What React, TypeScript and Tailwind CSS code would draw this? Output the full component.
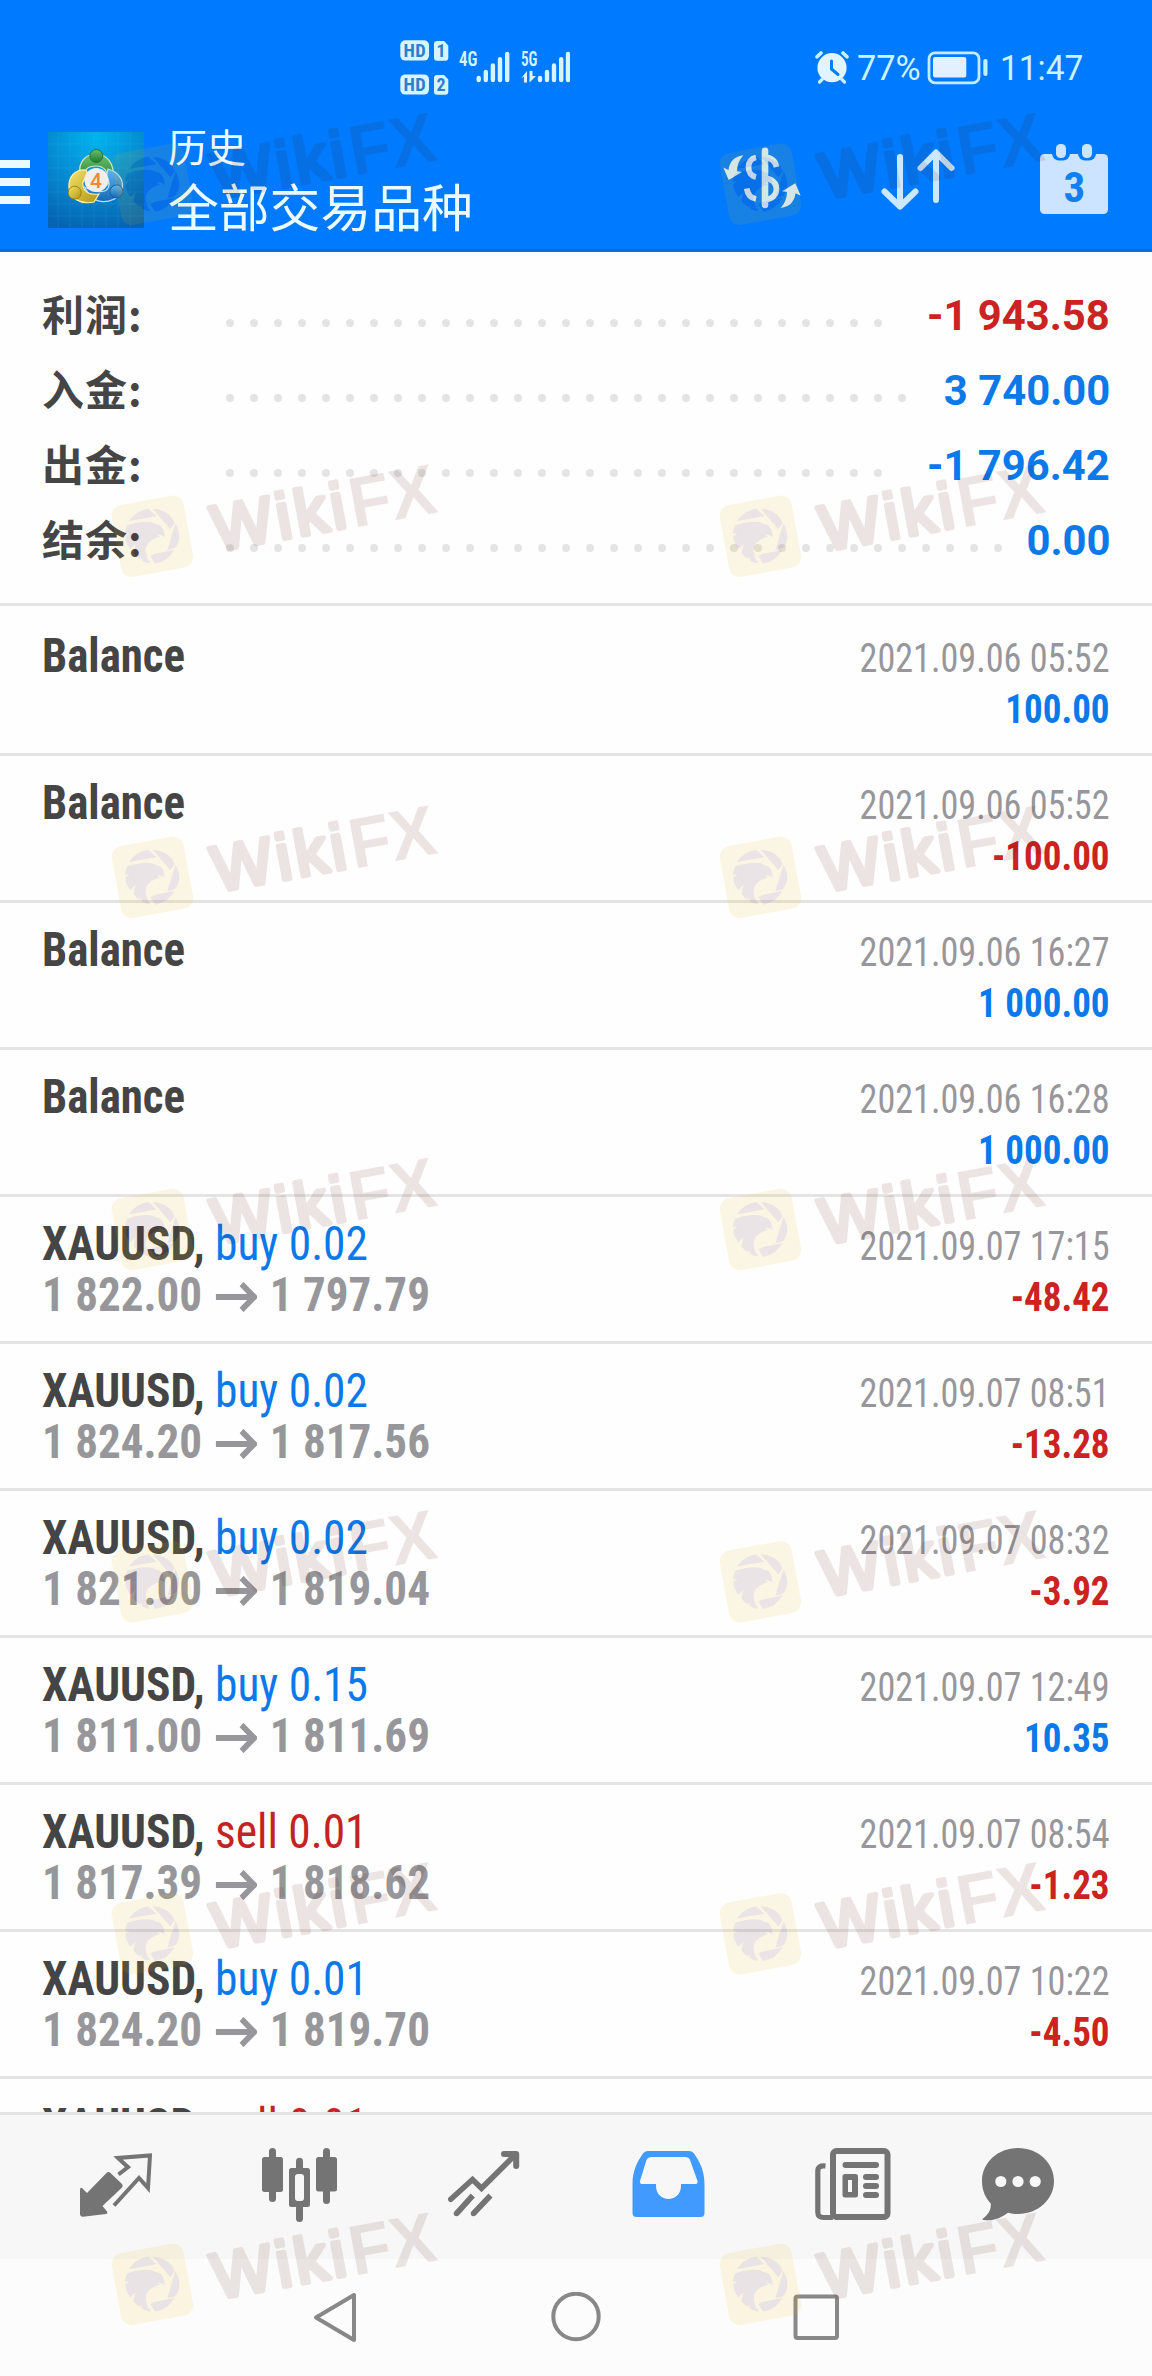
type Summary = { label: string; value: string; negative?: boolean; dots: number }

type Deal = {
  side?: 'buy' | 'sell'
  volume?: string
  open?: string
  close?: string
  time: string
  profit: string
  negative?: boolean
}

const summary: Summary[] = [
  { label: '利润:', value: '-1 943.58', negative: true, dots: 28 },
  { label: '入金:', value: '3 740.00', dots: 29 },
  { label: '出金:', value: '-1 796.42', dots: 28 },
  { label: '结余:', value: '0.00', dots: 33 },
]

const deals: Deal[] = [
  { time: '2021.09.06 05:52', profit: '100.00' },
  { time: '2021.09.06 05:52', profit: '-100.00', negative: true },
  { time: '2021.09.06 16:27', profit: '1 000.00' },
  { time: '2021.09.06 16:28', profit: '1 000.00' },
  { side: 'buy', volume: '0.02', open: '1 822.00', close: '1 797.79', time: '2021.09.07 17:15', profit: '-48.42', negative: true },
  { side: 'buy', volume: '0.02', open: '1 824.20', close: '1 817.56', time: '2021.09.07 08:51', profit: '-13.28', negative: true },
  { side: 'buy', volume: '0.02', open: '1 821.00', close: '1 819.04', time: '2021.09.07 08:32', profit: '-3.92', negative: true },
  { side: 'buy', volume: '0.15', open: '1 811.00', close: '1 811.69', time: '2021.09.07 12:49', profit: '10.35' },
  { side: 'sell', volume: '0.01', open: '1 817.39', close: '1 818.62', time: '2021.09.07 08:54', profit: '-1.23', negative: true },
  { side: 'buy', volume: '0.01', open: '1 824.20', close: '1 819.70', time: '2021.09.07 10:22', profit: '-4.50', negative: true },
  { side: 'sell', volume: '0.01', open: '1 817.39', close: '1 818.62', time: '2021.09.07 10:25', profit: '-1.23', negative: true },
]

const marks = [184.2, 536.3, 877.2, 1229.5, 1581.8, 1933.8, 2284.3].flatMap(y => [
  { x: 152.4, y },
  { x: 760.4, y },
])

function SignalIcons() {
  return (
    <svg width="170" height="60" viewBox="0 0 170 60" fill="#d6f5ff" className="font-['Roboto_Condensed'] font-bold">
      <rect x="0.3" y="1.2" width="28.7" height="20.4" rx="5" />
      <rect x="0.3" y="35.4" width="28.7" height="20.2" rx="5" />
      <path d="M37 2h7l4.3 4.5v12.3a3 3 0 0 1-3 3H37a3 3 0 0 1-3-3V5a3 3 0 0 1 3-3z" />
      <path d="M37 36h7l4.3 4.5v12.3a3 3 0 0 1-3 3H37a3 3 0 0 1-3-3V39a3 3 0 0 1 3-3z" />
      <g fill="#2a80cf">
        <text x="3.6" y="18" fontSize="18.5" textLength="22">HD</text>
        <text x="3.6" y="52.2" fontSize="18.5" textLength="22">HD</text>
        <text x="41" y="18.2" fontSize="18" textAnchor="middle">1</text>
        <text x="41" y="52.4" fontSize="18" textAnchor="middle">2</text>
      </g>
      <g className="font-semibold">
        <text x="59" y="26.6" fontSize="20" textLength="18.5" lengthAdjust="spacingAndGlyphs">4G</text>
        <text x="121" y="26.6" fontSize="20" textLength="16.5" lengthAdjust="spacingAndGlyphs">5G</text>
      </g>
      <g stroke="#d6f5ff" strokeWidth="4.4" strokeLinecap="round">
        <path d="M78.7 39v2M85.8 33v8M92.9 26.5V41M100 20.2V41M107.2 15V41" />
        <path d="M140 39v2M147 33v8M154 26.5V41M161.2 20.2V41M168 15V41" />
      </g>
      <path d="M121 39.5l6-7.5v11.5h-3v-6zM129.5 32v11.5l6.5-6.5h-3.5V32z" />
    </svg>
  )
}

function AlarmIcon() {
  return (
    <svg width="36" height="36" viewBox="0 0 36 36" fill="none" strokeLinecap="round">
      <circle cx="18" cy="16.7" r="14.6" fill="#e2f4ff" />
      <path d="M3 5.8L7 2M33 5.8L29 2" stroke="#c9f2ff" strokeWidth="3.6" />
      <path d="M8.5 28l-3 3M27.5 28l3 3" stroke="#c9f2ff" strokeWidth="3.2" />
      <path d="M17.5 10v8l6.5 5.5" stroke="#0a7cf5" strokeWidth="3" strokeLinejoin="round" />
    </svg>
  )
}

function BatteryIcon() {
  return (
    <svg width="63" height="36" viewBox="0 0 63 36">
      <rect x="3" y="1.8" width="50" height="30" rx="6" fill="none" stroke="#c3ecff" strokeWidth="2.8" />
      <rect x="7" y="6" width="33.3" height="20.6" rx="2" fill="#e3f0ff" />
      <rect x="57.3" y="8" width="4.2" height="17" rx="2" fill="#c3f0ff" />
    </svg>
  )
}

function AppLogo() {
  return (
    <svg width="96" height="96" viewBox="0 0 96 96">
      <defs>
        <radialGradient id="sky" cx="0.5" cy="0.05" r="1">
          <stop offset="0" stopColor="#00b4ee" />
          <stop offset="0.55" stopColor="#0587cf" />
          <stop offset="1" stopColor="#0563b0" />
        </radialGradient>
        <linearGradient id="green" x1="0" y1="0" x2="0" y2="1">
          <stop offset="0" stopColor="#6cc06a" />
          <stop offset="1" stopColor="#1c7a32" />
        </linearGradient>
        <linearGradient id="gold" x1="0" y1="0" x2="1" y2="1">
          <stop offset="0" stopColor="#f3e36a" />
          <stop offset="1" stopColor="#b49512" />
        </linearGradient>
        <linearGradient id="azure" x1="0" y1="0" x2="0" y2="1">
          <stop offset="0" stopColor="#5fb6ee" />
          <stop offset="1" stopColor="#1568b4" />
        </linearGradient>
      </defs>
      <rect width="96" height="96" fill="url(#sky)" />
      <path d="M10 0v96M22 0v96M34 0v96M46 0v96M58 0v96M70 0v96M82 0v96M0 12h96M0 24h96M0 36h96M0 48h96M0 60h96M0 72h96M0 84h96" stroke="#6fd0ff" strokeOpacity="0.16" strokeWidth="0.7" />
      <g strokeWidth="1.2">
        <path d="M32 42C30 30 38 22 48 22s19 9 17 24l-5 6C61 39 56 34 48 34s-11 3-11 8z" fill="url(#green)" stroke="#cfeac0" />
        <path d="M60 37c11 3 17 12 13.500 22-4.500 11-20 14-31 6l-6-10c9 5 18 6 22 3 4-4 3-10 0-14z" fill="url(#azure)" stroke="#b9e0ff" />
        <path d="M38 38c-11-1-18 7-17 18 1 10 11 17 25 14l5-8c-9 1-15-2-16-8-1-5 2-9 6-10z" fill="url(#gold)" stroke="#fff3b0" />
      </g>
      <circle cx="48.3" cy="24" r="6.5" fill="url(#green)" stroke="#1c6a2c" strokeWidth="0.8" />
      <circle cx="26.7" cy="60.700" r="6.5" fill="url(#gold)" stroke="#8a7412" strokeWidth="0.8" />
      <circle cx="68.5" cy="59.5" r="6.5" fill="url(#azure)" stroke="#0f5596" strokeWidth="0.8" />
      <circle cx="48.3" cy="48" r="12" fill="#f1efed" />
      <text x="48" y="55.500" textAnchor="middle" fontSize="21" fill="#f08a32" className="font-['Roboto'] font-medium">4</text>
    </svg>
  )
}

function CurrencyIcon() {
  return (
    <svg width="84" height="72" viewBox="0 0 84 72" fill="none" stroke="#d3ecff" strokeWidth="5.8">
      <path d="M45 6.8V61" strokeWidth="6.6" strokeLinecap="round" />
      <path d="M36 13.5c-5 1-7.5 5-7.5 9.5s2.500 9 7.5 10" />
      <path d="M45 13.5c6 0 10 3 11.500 9.500M45 34.5c7 0 11.5 5 11.5 10.500S52 55.500 46 55.500M26.700 44.500c1 6 4 9.500 9.300 10.500" />
      <g fill="#d3ecff" stroke="none">
        <path d="M23.3 11.3C14 12.5 9.5 18 8.5 26L3.3 23.5 8.7 36 22 28l-5-.8c0-6 2-11.2 6.3-15.900z" />
        <path d="M23.3 11.3C14 12.5 9.5 18 8.5 26L3.3 23.5 8.7 36 22 28l-5-.8c0-6 2-11.2 6.3-15.900z" transform="rotate(180 42 37.600)" />
      </g>
    </svg>
  )
}

function SortIcon() {
  return (
    <svg width="80" height="72" viewBox="0 0 80 72" fill="none" stroke="#cbe8ff" strokeWidth="6" strokeLinecap="round" strokeLinejoin="round">
      <path d="M22 13v49M6.500 47.500L22 62.500l15.500-15" />
      <path d="M58 56V9M42.500 24L58 8.500 73.500 24" />
    </svg>
  )
}

function CalendarIcon() {
  return (
    <svg width="72" height="72" viewBox="0 0 72 72">
      <rect x="2" y="10" width="68" height="60" rx="4.5" fill="#cce4ff" />
      <rect x="14" y="-4" width="18" height="20.5" rx="7" fill="#007bff" />
      <rect x="40" y="-4" width="18" height="20.5" rx="7" fill="#007bff" />
      <rect x="18" y="0" width="10" height="14" rx="4.5" fill="#cce4ff" />
      <rect x="44" y="0" width="10" height="14" rx="4.5" fill="#cce4ff" />
      <text x="36.3" y="57.600" textAnchor="middle" fontSize="43" fill="#0f7ff2" className="font-['Roboto_Condensed'] font-bold">3</text>
    </svg>
  )
}

function QuotesIcon() {
  return (
    <svg width="72" height="76" viewBox="0 0 72 76" fill="none">
      <path d="M0 41q1-2 2.500-.5L7 45l19.500-20q2-2 4 0L42 36q1.500 1.800 0 3.500L22.500 58l4.500 5.500q1 2-1 2.500L3 68.700q-3 0-3-3z" fill="#747474" />
      <path d="M38.500 26.500l9.500-7.300L38 10l32-2.500L68 40l-9-10-25 27.500" stroke="#747474" strokeWidth="4" />
    </svg>
  )
}

function ChartIcon() {
  return (
    <svg width="75" height="76" viewBox="0 0 75 76" fill="#747474">
      <rect y="9" width="21" height="35" rx="2.5" />
      <rect x="7" width="7" height="54" rx="3.5" />
      <rect x="54" y="9" width="21" height="34.5" rx="2.5" />
      <rect x="61" width="7" height="56" rx="3.5" />
      <rect x="34" y="9.700" width="7" height="64.3" rx="3.5" />
      <rect x="27" y="20" width="21" height="39" rx="2.5" />
      <rect x="33" y="26" width="9" height="27" rx="3" fill="#f7f7f7" />
    </svg>
  )
}

function TradeIcon() {
  return (
    <svg width="72" height="76" viewBox="0 0 72 76" fill="none" stroke="#747474" strokeWidth="5.6">
      <path d="M2.800 51.300L24.500 31.500l9 8.800L67 7" strokeLinecap="round" />
      <path d="M56 6h12.200v12" strokeWidth="6" strokeLinecap="round" strokeLinejoin="round" />
      <path d="M24.800 47.500L9 65M42.500 47.500L26 65" />
      <path d="M8.500 65.500v0M25.500 65.500v0" strokeLinecap="round" />
    </svg>
  )
}

function InboxIcon() {
  return (
    <svg width="73" height="76" viewBox="0 0 73 76">
      <path fillRule="evenodd" fill="#419bff" d="M15.500 3h42q3 0 4.500 2.500C68 14 72.500 23 72.500 36v29q0 4-4 4H4.500q-4 0-4-4V36C.5 23 5 14 11 5.500Q12.500 3 15.500 3zM20 9q-4 0-5.500 3L8 33q-.5 3 2 3h14v2c0 8 6 13 12.500 13S49 46 49 38v-2h14.500q2.500 0 2-3L58 12q-1-3-5-3z" />
    </svg>
  )
}

function NewsIcon() {
  return (
    <svg width="76" height="76" viewBox="0 0 76 76" fill="none" stroke="#747474">
      <rect x="18" y="3" width="54.5" height="66" rx="3.5" strokeWidth="6" />
      <path d="M10.500 18C5 17.500 2.800 19 2.800 23v41c0 4 2 5.500 6 5.500h9" strokeWidth="5.2" />
      <g fill="#747474" stroke="none">
        <rect x="27.5" y="14" width="36.5" height="6" rx="3" />
        <rect x="48" y="26" width="16" height="6" rx="3" />
        <rect x="48" y="35" width="16" height="6" rx="3" />
        <rect x="48" y="44" width="16" height="6" rx="3" />
        <path fillRule="evenodd" d="M30 26h10.500q2.500 0 2.500 2.500V47q0 2.500-2.500 2.500H30q-2.500 0-2.500-2.500V28.500Q27.500 26 30 26zm3 6v12h4V32z" />
      </g>
    </svg>
  )
}

function ChatIcon() {
  return (
    <svg width="72" height="76" viewBox="0 0 72 76">
      <path fill="#747474" d="M36 0c20 0 36 14.500 36 33S56 66 36 66c-3.500 0-7-.4-10-1.200C19 70 11 73.500 1.500 72c-1-.2-1.500-.7-.5-1.500C6 67 9.500 62 8.700 55.500 3.500 50 0 42.500 0 33 0 14.500 16 0 36 0z" />
      <g fill="#f7f7f7">
        <circle cx="18.8" cy="33.5" r="5.6" />
        <circle cx="36" cy="33.5" r="5.6" />
        <circle cx="53.2" cy="33.5" r="5.6" />
      </g>
    </svg>
  )
}

function DealRow({ deal }: { deal: Deal }) {
  return (
    <li className="flex h-[147px] justify-between border-b-[3px] border-[#e4e4e4] px-[42px] pt-[21px] font-['Roboto_Condensed'] whitespace-pre leading-[51px] first:h-[150px] first:pt-[24px]">
      <div className="text-[48px] font-bold">
        {deal.side ? (
          <>
            <div className="origin-left scale-x-[0.946] text-[#454545]">
              XAUUSD,{' '}
              <span className={deal.side === 'buy' ? 'font-[430] text-[#0b79ea]' : 'font-[430] text-[#c42323]'}>
                {deal.side} {deal.volume}
              </span>
            </div>
            <div className="flex origin-left scale-x-[0.939] items-center text-[#97979b]">
              <span>{deal.open}</span>
              <svg width="44" height="30" viewBox="0 0 44 30" fill="none" stroke="#97979b" strokeWidth="6" className="mx-[14px] mt-1">
                <path d="M0 15h41M27.500 2L41 15 27.500 28" />
              </svg>
              <span>{deal.close}</span>
            </div>
          </>
        ) : (
          <div className="origin-left scale-x-[0.935] text-[#454545]">Balance</div>
        )}
      </div>
      <div className="pt-[3px] text-right text-[40px]">
        <div className="origin-right scale-x-[0.904] font-[420] text-[#97979b]">{deal.time}</div>
        <div className={deal.negative ? 'origin-right scale-x-[0.925] font-bold text-[#cb2222]' : 'origin-right scale-x-[0.925] font-bold text-[#0b79ea]'}>
          {deal.profit}
        </div>
      </div>
    </li>
  )
}

// Tiled logo that lies over the whole screen
function Watermark() {
  return (
    <svg width="1152" height="2376" viewBox="0 0 1152 2376" className="pointer-events-none absolute inset-0 font-['Liberation_Sans']">
      {marks.map(({ x, y }) => (
        <g key={`${x}-${y}`} transform={`translate(${x} ${y})`} opacity="0.1">
          <rect x="-36.5" y="-36.5" width="73" height="73" rx="11" fill="#ebb905" transform="rotate(-10.4)" />
          <g fill="#4b0f26">
            <path d="M-24-15Q-16-26-4-27.500L4-20zM.3-27.500Q13-27 20-18L22-13 18-7zM23-13Q31 2 22.500 12L15 14zM1 18l21-4.500Q16 25 3 27.500L-2 20z" />
            <path d="M-25-11Q-14-15-5-14.500 1-14.500 4-12c6 0 8.500 7 8 13-2-2-4-3-7-2.500 1 1 2 1.500 3 1.500C2 2-2 4-5 8c-3 5-2 12 3 19-3 0-6-1-8-2.500l-1.500-5L-12 23q-5-3-7-6l2-9-5 5q-5-6-5-13l4-3-4.500.5Q-27-8-25-11z" />
          </g>
          <g transform="rotate(-10.4)" fill="#4b0f00">
            <text x="60.5" y="26" fontSize="64" letterSpacing="4.4" stroke="#4b0f00" strokeWidth="5" strokeLinejoin="round">Wiki</text>
            <text x="199.5" y="28" fontSize="71" textLength="87" lengthAdjust="spacingAndGlyphs" className="font-bold">FX</text>
          </g>
        </g>
      ))}
    </svg>
  )
}

export default function App() {
  return (
    <div className="relative flex h-[2376px] w-[1152px] flex-col overflow-hidden bg-[#fefefe] font-['Roboto','Noto_Sans_CJK_SC',sans-serif]">
      {/* Status bar */}
      <div className="flex h-[120px] items-center bg-[#007bff] pt-[18px] pr-[65px] pl-[400px] text-[35px] text-[#cdf2ff]">
        <SignalIcons />
        <div className="ml-auto flex items-center">
          <AlarmIcon />
          <span className="ml-[7px] w-[65px] origin-left scale-x-[0.98]">77%</span>
          <span className="ml-1"><BatteryIcon /></span>
          <span className="ml-[11px] w-[87px] origin-left scale-x-[0.955]">11:47</span>
        </div>
      </div>

      {/* App bar */}
      <header className="flex h-[132px] items-start border-b-[3px] border-[#0d6cd8] bg-[#007bff] pr-[42px]">
        <div className="mt-10 flex w-[30px] flex-col gap-[10px]">
          <div className="h-2 bg-[#eafaff]" />
          <div className="h-2 bg-[#eafaff]" />
          <div className="h-2 bg-[#eafaff]" />
        </div>
        <div className="mt-3 ml-[18px]">
          <AppLogo />
        </div>
        <div className="ml-[24px] pt-px font-['Noto_Sans_CJK_SC'] text-[#ecfbff]">
          <div className="text-[39px] leading-[48px]">历史</div>
          <h1 className="text-[50.8px] leading-[73px]">全部交易品种</h1>
        </div>
        <div className="mt-6 ml-auto flex">
          <CurrencyIcon />
          <span className="ml-[74px]"><SortIcon /></span>
          <span className="ml-[80px]"><CalendarIcon /></span>
        </div>
      </header>

      <main className="flex-1 overflow-hidden">
        <section className="h-[354px] border-b-[3px] border-[#e4e4e4] px-[42px] pt-[26px] font-bold">
          {summary.map(row => (
            <div key={row.label} className="flex h-[75px] text-[42px]">
              <span className="w-[184px] font-['Noto_Sans_CJK_SC'] leading-[70px] tracking-[1px] text-[#454545]">{row.label}</span>
              <span className="flex gap-4 pt-[41px]">
                {Array.from({ length: row.dots }, (_, i) => (
                  <span key={i} className="size-2 rounded-full bg-[#e4e4e4]" />
                ))}
              </span>
              <span className={row.negative ? 'ml-auto origin-right scale-x-[0.995] leading-[75px] text-[#cb2222]' : 'ml-auto origin-right scale-x-[0.995] leading-[75px] text-[#0b79ea]'}>
                {row.value}
              </span>
            </div>
          ))}
        </section>
        <ul>
          {deals.map((deal, i) => <DealRow key={i} deal={deal} />)}
        </ul>
      </main>

      {/* Bottom tabs */}
      <nav className="flex h-[147px] items-start border-t-[3px] border-[#e4e4e4] bg-[#f7f7f7] pt-[33px] pl-[24px]">
        <div className="flex w-[184px] justify-center"><QuotesIcon /></div>
        <div className="flex w-[183px] justify-center"><ChartIcon /></div>
        <div className="flex w-[185px] justify-center"><TradeIcon /></div>
        <div className="flex w-[184px] justify-center"><InboxIcon /></div>
        <div className="flex w-[186px] justify-center"><NewsIcon /></div>
        <div className="flex w-[144px] justify-center"><ChatIcon /></div>
      </nav>

      {/* System navigation */}
      <div className="flex h-[117px] justify-center gap-[190px] bg-[#fcfcfc] pt-[33px]">
        <svg width="50" height="50" viewBox="0 0 50 50" fill="none" stroke="#888" strokeWidth="4" strokeLinejoin="round">
          <path d="M5 25.500L43 3v45z" />
        </svg>
        <svg width="50" height="50" viewBox="0 0 50 50" fill="none" stroke="#888" strokeWidth="4">
          <circle cx="25" cy="24.500" r="22.700" />
        </svg>
        <svg width="50" height="50" viewBox="0 0 50 50" fill="none" stroke="#888" strokeWidth="4" strokeLinejoin="round">
          <rect x="4.500" y="4.500" width="41.500" height="41.500" rx="2" />
        </svg>
      </div>

      <Watermark />
    </div>
  )
}
